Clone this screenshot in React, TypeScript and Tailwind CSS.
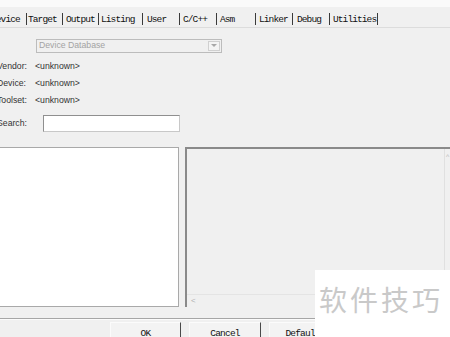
import React from 'react';

const TABS = [
  { label: 'Device', cls: 'w-[37px] pl-[1px] -ml-[10px]' },
  { label: 'Target', cls: 'w-[36px] pl-[1px]' },
  { label: 'Output', cls: 'w-[36px] pl-[3px]' },
  { label: 'Listing', cls: 'w-[44px] pl-[2px]' },
  { label: 'User', cls: 'w-[37px] pl-[4px]' },
  { label: 'C/C++', cls: 'w-[37px] pl-[3px]' },
  { label: 'Asm', cls: 'w-[39px] pl-[3px]' },
  { label: 'Linker', cls: 'w-[37px] pl-[3px]' },
  { label: 'Debug', cls: 'w-[37px] pl-[4px]' },
  { label: 'Utilities', cls: 'w-[48px] pl-[3px]' },
];

const INFO = [
  { label: 'Vendor:', value: '<unknown>' },
  { label: 'Device:', value: '<unknown>' },
  { label: 'Toolset:', value: '<unknown>' },
];

const mono = "font-['Liberation_Mono','DejaVu_Sans_Mono',monospace]";
const sans = "font-['Liberation_Sans',Arial,sans-serif]";

export default function App() {
  return (
    <div className={`relative w-[450px] h-[337px] overflow-hidden bg-[#f0f0f0] ${sans}`}>
      <div className="h-[7px] bg-[#fafafa]" />

      {/* tab strip */}
      <div className={`flex h-[21px] items-start pt-[6px] border-b border-[#dcdcdc] text-[9.5px] tracking-[-0.9px] text-[#111] ${mono}`}>
        {TABS.map((t) => (
          <div key={t.label} className={`flex h-[12px] shrink-0 items-center justify-between whitespace-nowrap ${t.cls}`}>
            <span className="pt-[2px]">{t.label}</span>
            <span className="h-[12px] w-px shrink-0 bg-[#3a3a3a]" />
          </div>
        ))}
      </div>

      {/* device database combo */}
      <div className="mt-[11px] ml-[36px] flex h-[14px] w-[186px] items-center justify-between border border-[#bcbcbc] bg-[#f0f0f0]">
        <span className="pl-[2px] text-[8.7px] text-[#a3a3a3]">Device Database</span>
        <span className="mr-[1px] flex h-[10px] w-[12px] items-center justify-center border border-[#d0d0d0] bg-[#f4f4f4]">
          <svg width="6" height="4" viewBox="0 0 6 4">
            <path d="M0 0 L6 0 L3 3 Z" fill="#a8a8a8" />
          </svg>
        </span>
      </div>

      {/* info rows */}
      <div className="mt-[5px] flex flex-col text-[8.7px] text-[#333]">
        {INFO.map((r) => (
          <div key={r.label} className="flex h-[17px] items-center">
            <span className="-ml-[3px] w-[38px]">{r.label}</span>
            <span>{r.value}</span>
          </div>
        ))}
        <div className="mt-[6px] flex h-[17px] items-center">
          <span className="-ml-[3px] w-[46px]">Search:</span>
          <div className="h-[17px] w-[137px] border border-[#8f8f8f] border-r-[#c8c8c8] border-b-[#c8c8c8] bg-white" />
        </div>
      </div>

      {/* lists */}
      <div className="mt-[15px] flex h-[160px] gap-[6px]">
        <div className="-ml-[2px] h-full w-[181px] shrink-0 border border-[#a9a9a9] bg-white" />
        <div className="flex h-full w-[273px] shrink-0 flex-col border-t-2 border-l-2 border-[#8a8a8a] bg-[#f0f0f0]">
          <div className="flex flex-1">
            <div className="flex-1" />
            <div className="w-[14px] border-l border-[#e0e0e0] pl-[1px] pt-[4px] text-[7px] leading-none text-[#b8b8b8]">
              ^
            </div>
          </div>
          <div className="flex h-[13px] items-center border-t border-[#e4e4e4] pl-[4px] text-[8px] text-[#b0b0b0]">
            &lt;
          </div>
        </div>
      </div>

      {/* bottom separator & buttons */}
      <div className="mt-[11px] h-[2px] border-t border-[#a6a6a6] bg-[#fbfbfb]" />
      <div className={`mt-[2px] flex gap-[8px] pl-[110px] text-[9.5px] tracking-[-0.8px] text-[#111] ${mono}`}>
        <div className="flex h-[22px] w-[71px] justify-center border-t border-l border-[#fbfbfb] border-r border-r-[#4a4a4a] bg-[#f3f3f3] pt-[4px]">
          OK
        </div>
        <div className="flex h-[22px] w-[72px] justify-center border-t border-l border-[#fbfbfb] border-r border-r-[#4a4a4a] bg-[#f3f3f3] pt-[4px]">
          Cancel
        </div>
        <div className="flex h-[22px] w-[72px] justify-center border-t border-l border-[#fbfbfb] border-r border-r-[#4a4a4a] bg-[#f3f3f3] pt-[4px]">
          Defaults
        </div>
      </div>

      {/* watermark */}
      <div className="absolute left-[315px] top-[270px] h-[67px] w-[135px] bg-white pl-[4px] pt-[15px]">
        <span className="text-[28px] leading-none tracking-[3px] text-[#c9c9c9] font-['Noto_Sans_CJK_SC','Noto_Sans',sans-serif]">
          软件技巧
        </span>
      </div>
    </div>
  );
}
